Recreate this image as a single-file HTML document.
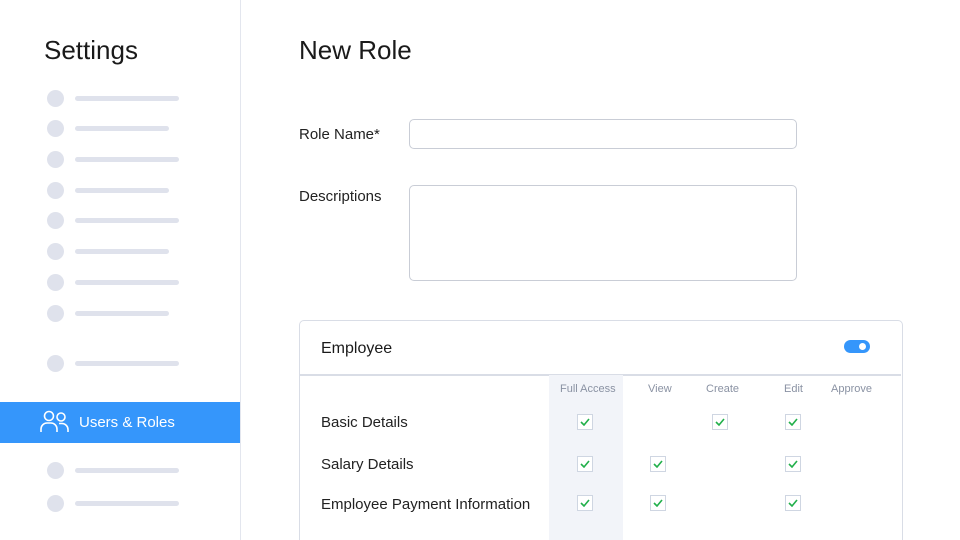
<!DOCTYPE html><html><head><style>
html,body{margin:0;width:960px;height:540px;overflow:hidden}
body{background:#fff;font-family:"Liberation Sans",sans-serif;position:relative;color:#1a1a1a}
.a{position:absolute}
.sb{left:0;top:0;width:240px;height:540px;border-right:1px solid #e3e6ee}
.dot{width:17px;height:17px;border-radius:50%;background:#dfe2ec;left:47px}
.ln{height:5px;border-radius:3px;background:#dfe2ec;left:75px}
.inp{border:1.5px solid #c9cdd6;border-radius:5px;left:409px;width:386px}
.cb{width:14px;height:14px;border:1px solid #cfd6e2;background:#fff}
.cb svg{position:absolute;left:2px;top:3px}
.h{font-size:11px;color:#8a92a3}
.r{font-size:15px;color:#222}
</style></head><body>
<div class="a sb"></div>
<div class="a" style="left:44px;top:35px;font-size:26px">Settings</div>
<div class="a" style="left:299px;top:35px;font-size:26px">New Role</div>

<div class="a dot" style="top:90px"></div><div class="a ln" style="top:96px;width:104px"></div>
<div class="a dot" style="top:120px"></div><div class="a ln" style="top:126px;width:94px"></div>
<div class="a dot" style="top:151px"></div><div class="a ln" style="top:157px;width:104px"></div>
<div class="a dot" style="top:182px"></div><div class="a ln" style="top:188px;width:94px"></div>
<div class="a dot" style="top:212px"></div><div class="a ln" style="top:218px;width:104px"></div>
<div class="a dot" style="top:243px"></div><div class="a ln" style="top:249px;width:94px"></div>
<div class="a dot" style="top:274px"></div><div class="a ln" style="top:280px;width:104px"></div>
<div class="a dot" style="top:305px"></div><div class="a ln" style="top:311px;width:94px"></div>
<div class="a dot" style="top:355px"></div><div class="a ln" style="top:361px;width:104px"></div>
<div class="a dot" style="top:462px"></div><div class="a ln" style="top:468px;width:104px"></div>
<div class="a dot" style="top:495px"></div><div class="a ln" style="top:501px;width:104px"></div>

<div class="a" style="left:0;top:402px;width:240px;height:41px;background:#3596fb"></div>
<svg class="a" style="left:40px;top:410px" width="30" height="24" viewBox="0 0 30 24" fill="none" stroke="#fff" stroke-width="1.6"><circle cx="9" cy="6" r="4.5"/><path d="M1 22v-3a6 6 0 0 1 6-6h4a6 6 0 0 1 6 6v3"/><circle cx="21" cy="7" r="4"/><path d="M19 13.5h3a6 6 0 0 1 6 6v2.5"/></svg>
<div class="a" style="left:79px;top:414px;font-size:15px;color:#fff">Users &amp; Roles</div>

<div class="a r" style="left:299px;top:126px">Role Name*</div>
<div class="a inp" style="top:119px;height:28px"></div>
<div class="a r" style="left:299px;top:188px">Descriptions</div>
<div class="a inp" style="top:185px;height:94px"></div>

<div class="a" style="left:299px;top:320px;width:602px;height:240px;border:1.5px solid #d9dde6;border-radius:5px"></div>
<div class="a" style="left:300px;top:374px;width:601px;height:1.5px;background:#d9dde6"></div>
<div class="a" style="left:549px;top:375px;width:74px;height:170px;background:#f2f4f9"></div>
<div class="a" style="left:321px;top:340px;font-size:16px">Employee</div>
<div class="a" style="left:844px;top:340px;width:26px;height:13px;border-radius:7px;background:#3596fb"></div>
<div class="a" style="left:859px;top:343px;width:7px;height:7px;border-radius:50%;background:#fff"></div>

<div class="a h" style="left:560px;top:383px">Full Access</div>
<div class="a h" style="left:648px;top:383px">View</div>
<div class="a h" style="left:706px;top:383px">Create</div>
<div class="a h" style="left:784px;top:383px">Edit</div>
<div class="a h" style="left:831px;top:383px">Approve</div>

<div class="a r" style="left:321px;top:414px">Basic Details</div>
<div class="a r" style="left:321px;top:456px">Salary Details</div>
<div class="a r" style="left:321px;top:496px">Employee Payment Information</div>

<svg width="0" height="0" style="position:absolute"><defs><symbol id="ck" viewBox="0 0 10 8"><path d="M1 4l3 3 5-6" fill="none" stroke="#22b04b" stroke-width="1.6"/></symbol></defs></svg>
<div class="a cb" style="left:577px;top:414px"><svg width="10" height="8"><use href="#ck"/></svg></div>
<div class="a cb" style="left:712px;top:414px"><svg width="10" height="8"><use href="#ck"/></svg></div>
<div class="a cb" style="left:785px;top:414px"><svg width="10" height="8"><use href="#ck"/></svg></div>
<div class="a cb" style="left:577px;top:456px"><svg width="10" height="8"><use href="#ck"/></svg></div>
<div class="a cb" style="left:650px;top:456px"><svg width="10" height="8"><use href="#ck"/></svg></div>
<div class="a cb" style="left:785px;top:456px"><svg width="10" height="8"><use href="#ck"/></svg></div>
<div class="a cb" style="left:577px;top:495px"><svg width="10" height="8"><use href="#ck"/></svg></div>
<div class="a cb" style="left:650px;top:495px"><svg width="10" height="8"><use href="#ck"/></svg></div>
<div class="a cb" style="left:785px;top:495px"><svg width="10" height="8"><use href="#ck"/></svg></div>
</body></html>
